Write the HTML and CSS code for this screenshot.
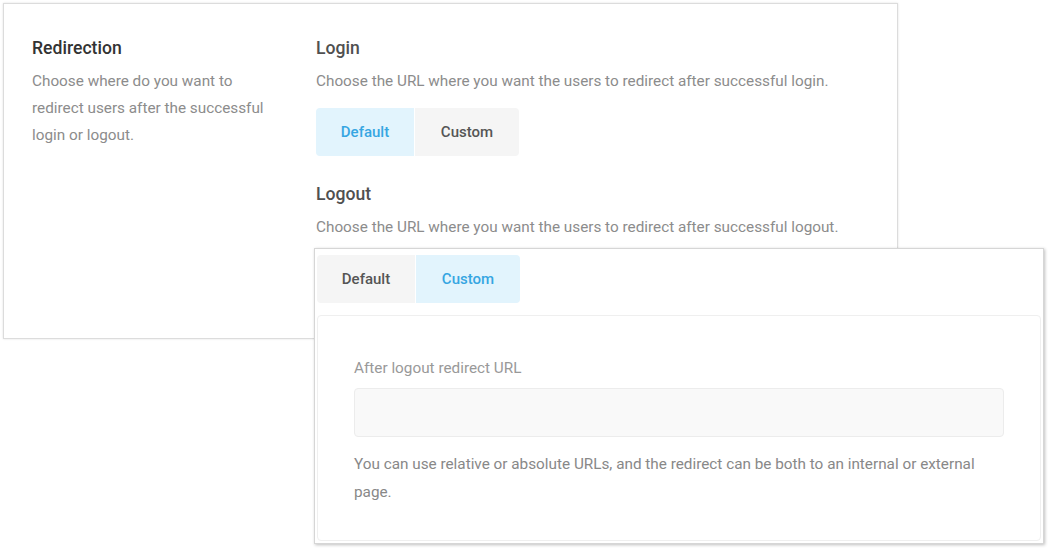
FILE: index.html
```html
<!DOCTYPE html>
<html>
<head>
<meta charset="utf-8">
<link rel="stylesheet" href="styles.css">
</head>
<body>
<div class="stage">
  <section class="card">
    <div class="side">
      <h2 class="title">Redirection</h2>
      <p class="desc side-desc">Choose where do you want to redirect users after the successful login or logout.</p>
    </div>
    <div class="main">
      <div class="group">
        <h3 class="subtitle">Login</h3>
        <p class="desc">Choose the URL where you want the users to redirect after successful login.</p>
        <div class="tabs">
          <span class="tab active">Default</span>
          <span class="tab">Custom</span>
        </div>
      </div>
      <div class="group group-logout">
        <h3 class="subtitle">Logout</h3>
        <p class="desc">Choose the URL where you want the users to redirect after successful logout.</p>
      </div>
    </div>
  </section>

  <section class="popout">
    <div class="tabs">
      <span class="tab">Default</span>
      <span class="tab active">Custom</span>
    </div>
    <div class="panel">
      <label class="field-label">After logout redirect URL</label>
      <div class="input"></div>
      <p class="help">You can use relative or absolute URLs, and the redirect can be both to an internal or external page.</p>
    </div>
  </section>
</div>
</body>
</html>
```
FILE: styles.css
```css
* { box-sizing: border-box; }
html, body { margin: 0; padding: 0; background: #fff; }
body {
  font-family: Roboto, "Liberation Sans", sans-serif;
  width: 1050px;
  height: 550px;
  overflow: hidden;
}
.stage {
  position: relative;
  width: 1050px;
  height: 550px;
  padding: 3px;
}
.card {
  width: 895px;
  height: 336px;
  border: 1px solid #dcdcdc;
  box-shadow: 0 0 2px rgba(0,0,0,0.12);
  background: #fff;
  padding: 32px 20px 0 28px;
  display: grid;
  grid-template-columns: 284px 1fr;
}
.title, .subtitle {
  margin: 0;
  font-size: 17.6px;
  line-height: 24px;
  font-weight: 500;
}
.title { color: #333; }
.subtitle { color: #505050; }
.desc {
  margin: 8px 0 0;
  font-size: 15.3px;
  line-height: 27px;
  color: #8c8c8c;
}
.side-desc { width: 240px; }
.tabs {
  display: flex;
  gap: 1px;
  margin-top: 13px;
}
.tab {
  display: flex;
  align-items: center;
  justify-content: center;
  height: 48px;
  font-size: 15px;
  font-weight: 500;
  color: #555;
  background: #f5f5f5;
}
.tab:first-child { width: 98px; border-radius: 4px 0 0 4px; }
.tab:last-child { width: 104px; border-radius: 0 4px 4px 0; }
.tab.active { background: #e2f4fd; color: #36a6e2; }
.group-logout { margin-top: 26px; }

.popout {
  position: absolute;
  left: 314px;
  top: 248px;
  width: 730px;
  height: 296px;
  background: #fff;
  border: 1px solid #d6d6d6;
  box-shadow: 1px 1px 3px rgba(0,0,0,0.25);
  padding: 6px 2px 2px 2px;
  display: flex;
  flex-direction: column;
}
.popout .tabs { margin-top: 0; }
.panel {
  flex: 1;
  margin-top: 12px;
  border: 1px solid #efefef;
  border-radius: 4px;
  padding: 42px 36px 0 36px;
}
.field-label {
  display: block;
  font-size: 15.3px;
  line-height: 20px;
  color: #999;
}
.input {
  margin-top: 10px;
  height: 49px;
  background: #f9f9f9;
  border: 1px solid #ececec;
  border-radius: 4px;
}
.help {
  margin: 13px 0 0;
  font-size: 15.3px;
  line-height: 28px;
  color: #888;
}
```
